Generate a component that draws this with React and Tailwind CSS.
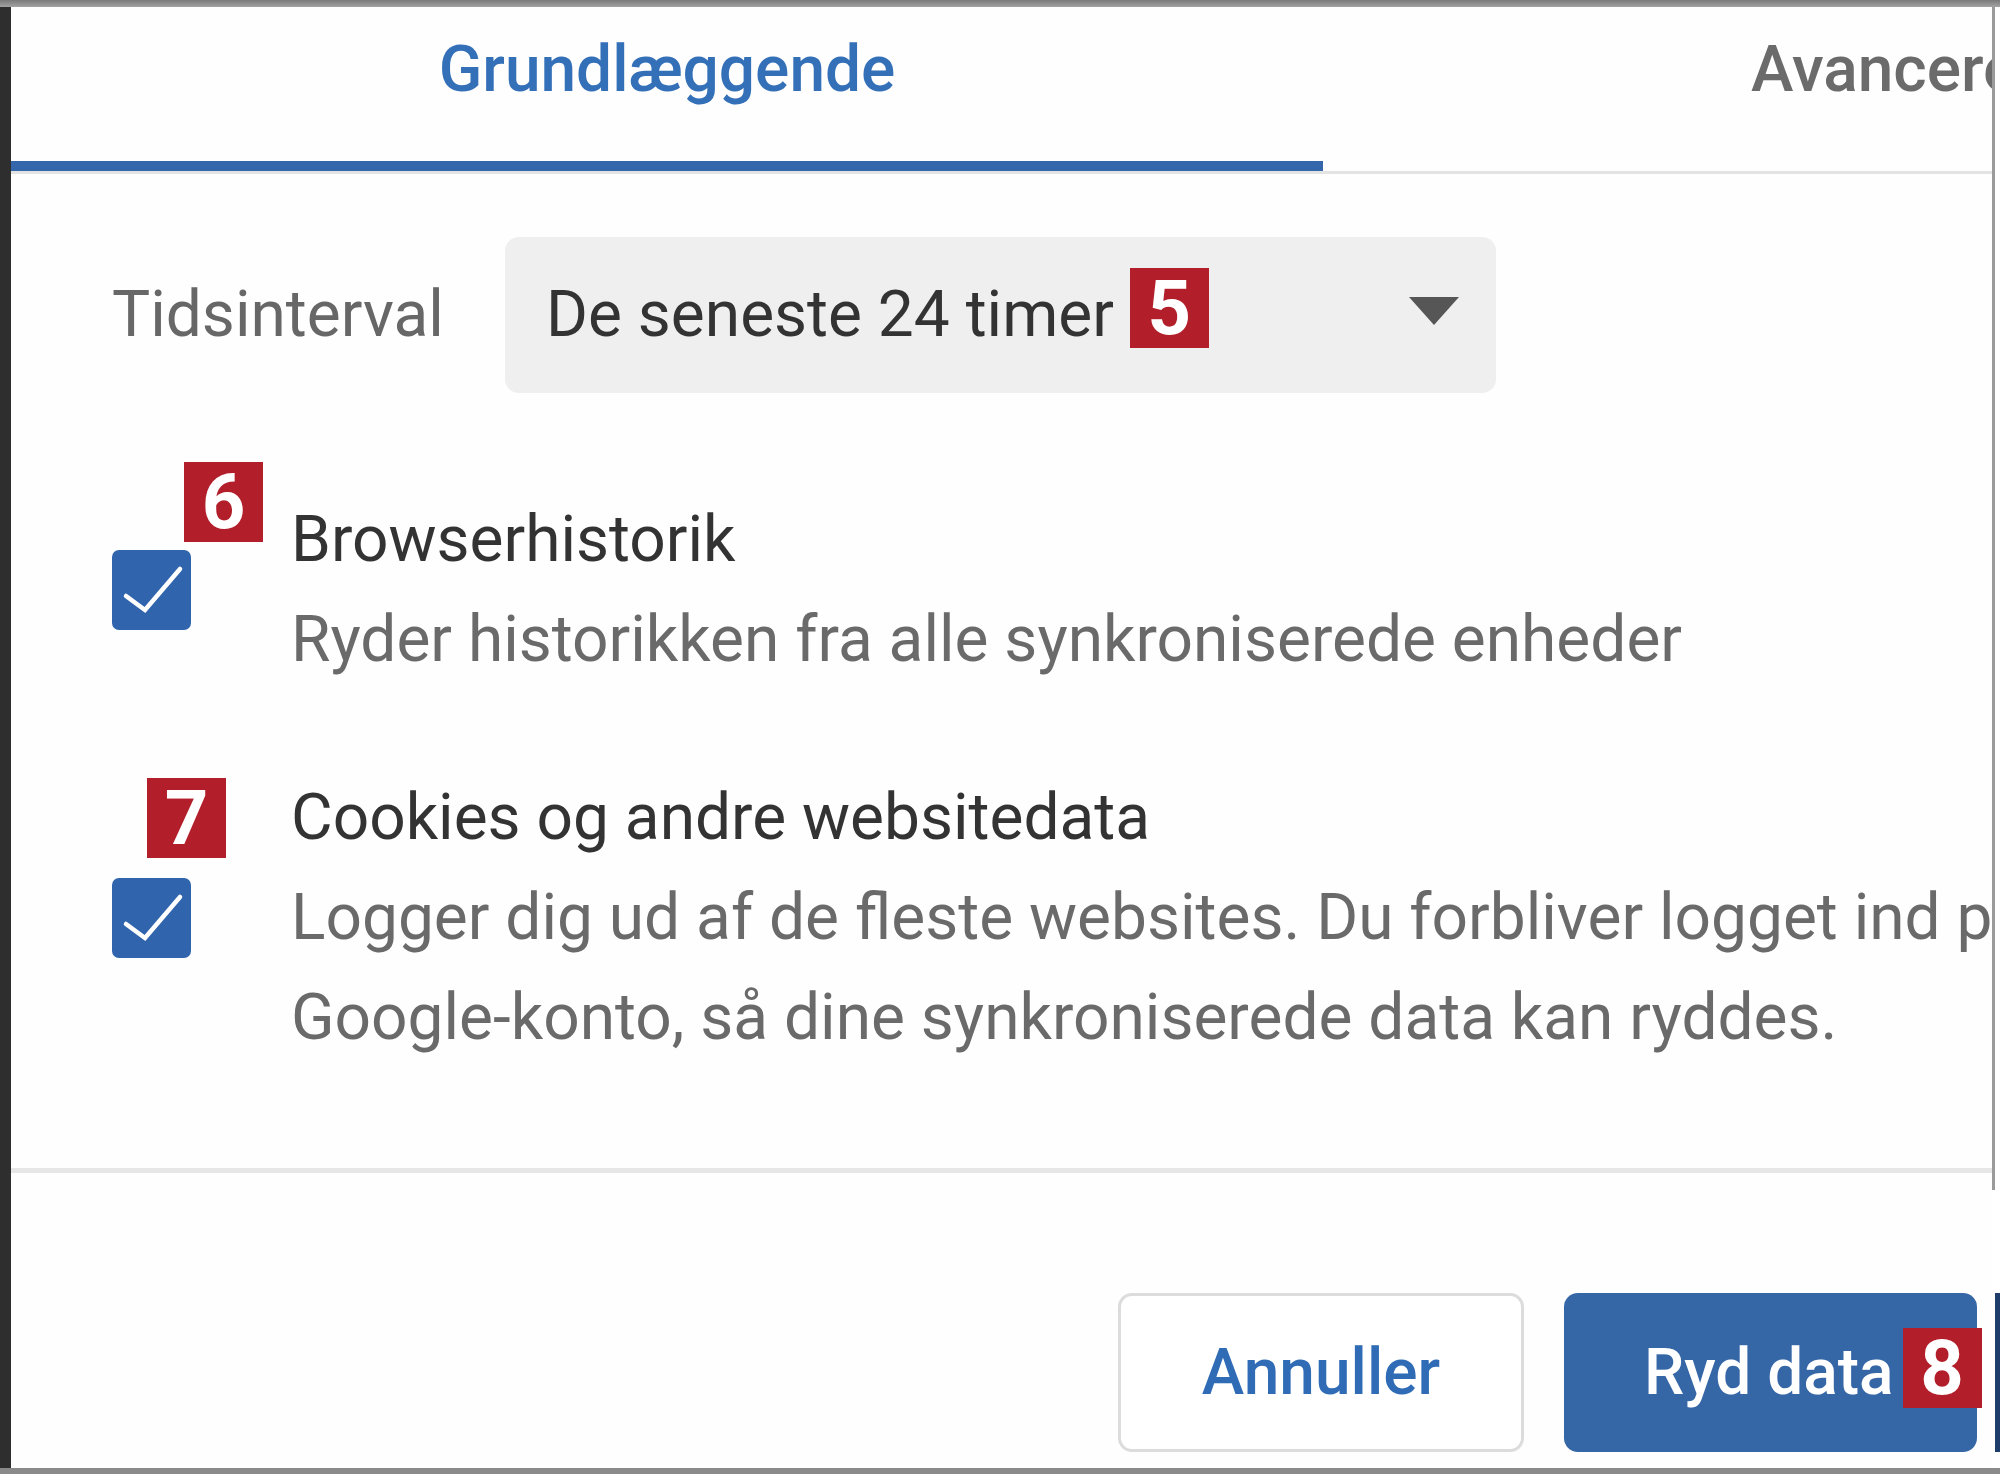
function Badge({ n, className = "" }) {
  return (
    <div
      className={`w-[79px] h-[80px] shrink-0 flex items-center justify-center bg-[#b21f2a] text-white text-[76px] font-bold leading-none font-['Roboto','Liberation_Sans',sans-serif] ${className}`}
    >
      {n}
    </div>
  );
}

function Check() {
  return (
    <div className="w-[79px] h-[80px] rounded-[7px] bg-[#3064ad] flex items-center justify-center">
      <svg width="79" height="80" viewBox="0 0 79 80">
        <polyline
          points="14,46 33,60 68,19"
          fill="none"
          stroke="#ffffff"
          strokeWidth="4.5"
          strokeLinecap="round"
          strokeLinejoin="miter"
        />
      </svg>
    </div>
  );
}

export default function App() {
  return (
    <div className="w-[2000px] h-[1474px] flex flex-col overflow-hidden font-['Roboto','Liberation_Sans',sans-serif] text-[64px]">
      <div className="h-[7px] shrink-0 bg-gradient-to-b from-[#7a7a7a] to-[#a3a3a3]" />
      <div className="flex-1 flex flex-row min-h-0">
        <div className="w-[11px] shrink-0 bg-[#2e2e2e]" />
        <div className="w-[1981px] shrink-0 bg-[#fefefe] overflow-hidden flex flex-col">
          {/* Tabs */}
          <div className="h-[167px] shrink-0 flex flex-row border-b-[3px] border-[#e3e3e3]">
            <div className="w-[1312px] shrink-0 flex flex-col justify-between">
              <div className="pt-[13px] text-center leading-[100px] font-medium text-[#3470b8]">
                Grundlæggende
              </div>
              <div className="h-[10px] bg-[#3466ab]" />
            </div>
            <div className="pl-[428px] pt-[13px] leading-[100px] whitespace-nowrap font-medium text-[#6b6b6b]">
              Avancerede
            </div>
          </div>

          {/* Time range */}
          <div className="mt-[63px] pl-[101px] flex flex-row items-center">
            <div className="w-[393px] shrink-0 leading-[100px] text-[#676767]">Tidsinterval</div>
            <div className="w-[991px] h-[156px] shrink-0 rounded-[14px] bg-[#efefef] flex flex-row items-center justify-between pl-[41px] pr-[37px]">
              <div className="flex flex-row items-center">
                <span className="leading-[100px] text-[#333333] whitespace-nowrap">De seneste 24 timer</span>
                <Badge n="5" className="ml-[16px] mb-[15px]" />
              </div>
              <svg width="50" height="28" viewBox="0 0 50 28" className="mb-[8px]">
                <polygon points="0,0 50,0 25,28" fill="#565656" />
              </svg>
            </div>
          </div>

          {/* Row 1 */}
          <div className="mt-[97px] pl-[101px] flex flex-row items-center">
            <div className="relative w-[179px] shrink-0 self-stretch flex items-center">
              <Check />
              <Badge n="6" className="absolute left-[72px] top-[-28px]" />
            </div>
            <div className="flex flex-col leading-[100px] whitespace-nowrap">
              <div className="text-[#333333]">Browserhistorik</div>
              <div className="text-[#6a6a6a]">Ryder historikken fra alle synkroniserede enheder</div>
            </div>
          </div>

          {/* Row 2 */}
          <div className="mt-[78px] pl-[101px] flex flex-row items-center">
            <div className="relative w-[179px] shrink-0 self-stretch flex items-center">
              <Check />
              <Badge n="7" className="absolute left-[35px] top-[10px]" />
            </div>
            <div className="flex flex-col leading-[100px] whitespace-nowrap">
              <div className="text-[#333333]">Cookies og andre websitedata</div>
              <div className="text-[#6a6a6a]">
                Logger dig ud af de fleste websites. Du forbliver logget ind på din
              </div>
              <div className="text-[#6a6a6a]">Google-konto, så dine synkroniserede data kan ryddes.</div>
            </div>
          </div>

          {/* Separator */}
          <div className="mt-[100px] h-[5px] shrink-0 bg-[#e6e6e6]" />

          {/* Buttons */}
          <div className="mt-[120px] flex flex-row justify-end gap-[40px] pr-[15px]">
            <div className="w-[406px] h-[159px] shrink-0 rounded-[14px] border-[3px] border-[#dcdcdc] bg-white flex items-center justify-center font-medium text-[#2f6cb5] leading-none">
              Annuller
            </div>
            <div className="w-[413px] h-[159px] shrink-0 rounded-[14px] bg-[#3566a6] flex flex-row items-center pl-[80px] font-medium text-white leading-none">
              <span className="whitespace-nowrap">Ryd data</span>
              <Badge n="8" className="ml-[9px] mb-[10px]" />
            </div>
          </div>
        </div>
        <div className="w-[8px] shrink-0 bg-white flex flex-col">
          <div className="w-[3px] h-[1183px] shrink-0 bg-[#9a9a9a]" />
          <div className="h-[103px] shrink-0" />
          <div className="w-[5px] h-[159px] shrink-0 ml-auto bg-[#1f3d6b]" />
        </div>
      </div>
      <div className="h-[6px] shrink-0 bg-[#8a8a8a]" />
    </div>
  );
}
